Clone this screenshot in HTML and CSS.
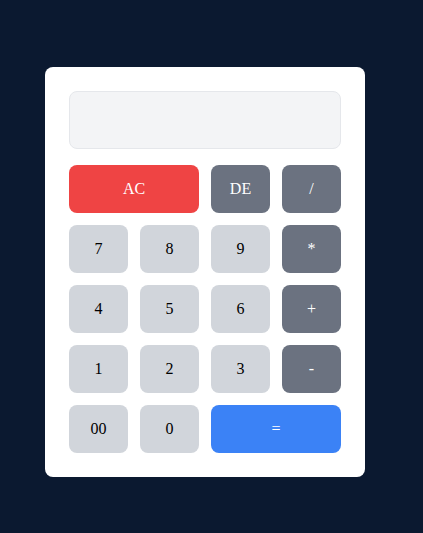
FILE: index.html
```html
<!DOCTYPE html>
<html>
<head>
<meta charset="utf-8">
<link rel="stylesheet" href="styles.css">
</head>
<body>
<div class="card">
  <div class="display"></div>
  <div class="keys">
    <button class="key red span2">AC</button>
    <button class="key dark">DE</button>
    <button class="key dark">/</button>
    <button class="key light">7</button>
    <button class="key light">8</button>
    <button class="key light">9</button>
    <button class="key dark">*</button>
    <button class="key light">4</button>
    <button class="key light">5</button>
    <button class="key light">6</button>
    <button class="key dark">+</button>
    <button class="key light">1</button>
    <button class="key light">2</button>
    <button class="key light">3</button>
    <button class="key dark">-</button>
    <button class="key light">00</button>
    <button class="key light">0</button>
    <button class="key blue span2">=</button>
  </div>
</div>
</body>
</html>
```
FILE: styles.css
```css
html, body {
  margin: 0;
  background: #0b1930;
  height: 100%;
}
body {
  padding: 67px 0 0 45px;
  box-sizing: border-box;
  font-family: "Liberation Serif", "Times New Roman", serif;
}
.card {
  width: 320px;
  box-sizing: border-box;
  background: #ffffff;
  border-radius: 8px;
  padding: 24px;
}
.display {
  height: 58px;
  box-sizing: border-box;
  background: #f3f4f6;
  border: 1px solid #e5e7eb;
  border-radius: 8px;
  margin-bottom: 16px;
}
.keys {
  display: grid;
  grid-template-columns: repeat(4, 59px);
  grid-auto-rows: 48px;
  gap: 12px;
}
.key {
  border: none;
  border-radius: 8px;
  font-family: "Liberation Serif", "Times New Roman", serif;
  font-size: 16px;
  padding: 0;
  margin: 0;
}
.span2 { grid-column: span 2; }
.red { background: #ef4444; color: #ffffff; }
.dark { background: #6b7280; color: #ffffff; }
.light { background: #d1d5db; color: #000000; }
.blue { background: #3b82f6; color: #ffffff; }
```
